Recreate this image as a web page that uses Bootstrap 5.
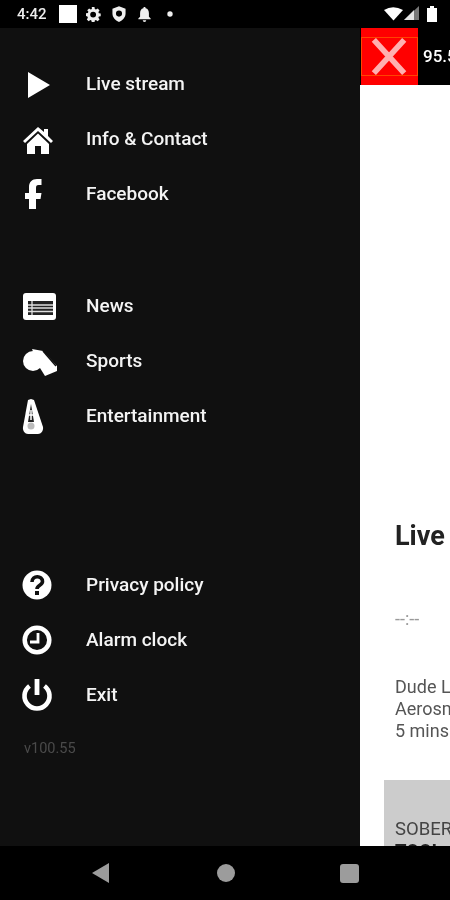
<!DOCTYPE html>
<html lang="en"><head><meta charset="utf-8"><title>Drawer</title>
<link href="https://cdn.jsdelivr.net/npm/bootstrap@5.3.0/dist/css/bootstrap.min.css" rel="stylesheet">
<style>
html,body{margin:0;height:900px;overflow:hidden;background:#000}
body{font-family:Roboto,"Liberation Sans",sans-serif;width:450px}
.statusrow{height:28px;background:#000;color:#eee;font-size:15px;font-weight:500;padding:0 13px 0 17px;filter:blur(.5px)}
.statusrow svg{display:block;flex:none}
.sq{width:18px;height:18px;background:#fff;margin-left:12px}
.mainrow{height:818px;overflow:hidden;filter:blur(.5px)}
.drawer{width:360px;flex:none;background:#101010;padding-top:28px}
.navitem{height:55px;color:#f4f4f4;font-size:19px;font-weight:500;line-height:1;padding-left:18px;gap:28px;white-space:nowrap}
.navitem svg{width:40px;height:40px;flex:none}
.grp2{margin-top:57px}.grp3{margin-top:114px}
.ver{color:#4a4a4a;font-size:14.500px;margin:17px 0 0 24px;line-height:20px}
.side{flex:1;min-width:0;background:#fff;overflow:hidden;white-space:nowrap}
.topbar{height:57px;background:#000;color:#fff;font-size:17px;font-weight:500}
.closebtn{width:57px;height:57px;margin-left:1px;background:#f00;flex:none;padding:9px 0;margin-right:5px}
.closeinner{height:39px;border:1px solid #f40;display:block;width:100%}
.livehead{font-size:27px;font-weight:700;color:#222;margin:436px 0 0 35px;line-height:30px}
.clock{font-size:18px;color:#999;margin:58px 0 0 35px;line-height:20px}
.track{font-size:18px;color:#555;line-height:22px;margin:47px 0 0 35px}
.graybox{background:#ccc;margin:38px 0 0 24px;height:80px;overflow:hidden;padding:39px 0 0 11px;font-size:18.500px;line-height:20px;color:#444}
.graybox b{color:#222;display:block;line-height:20px;margin-top:2px}
.btmbar{height:54px;background:#000;filter:blur(.5px)}
.softback{width:18px;height:20px;margin-left:92px}
.softhome{width:18px;height:18px;border-radius:50%;background:#9c9c9c;margin-left:107px}
.softrec{width:19px;height:19px;border-radius:3px;background:#9c9c9c;margin-left:105px}
</style></head><body>
<div class="statusrow d-flex align-items-center">
<span>4:42</span><span class="sq"></span>
<svg width="15" height="15" viewBox="0 0 16 16" style="margin-left:9px"><path fill="#eee" fill-rule="evenodd" d="M6.500 0h3l.4 2.200 1.300.6L13.200 1.600l2 2.200-1.300 1.800.5 1.300 2.100.5v3l-2.100.4-.5 1.300 1.300 1.800-2.200 2-1.800-1.200-1.300.5-.4 2.200h-3l-.4-2.200-1.300-.5-1.800 1.200-2.100-2 1.200-1.800-.5-1.300L0 10V7l2.100-.4.600-1.300L1.400 3.700l2.100-2.100 1.800 1.200 1.300-.6zM8 5.200a3.300 3.300 0 1 0 0 6.600 3.300 3.300 0 0 0 0-6.600z" transform="scale(.95)"/></svg>
<svg width="14" height="16" viewBox="0 0 16 18" style="margin-left:11px"><path fill="#eee" fill-rule="evenodd" d="M8 0l7.500 3v5.500c0 4.300-3 7.700-7.500 9.500C3.500 16.200.5 12.800.5 8.500V3zM8 5a3.500 3.500 0 1 0 0 7 3.500 3.500 0 0 0 0-7z"/></svg>
<svg width="13" height="15" viewBox="0 0 14 17" style="margin-left:12px"><path fill="#eee" d="M7 0c.8 0 1.300.6 1.300 1.400C10.800 2 12 4 12 7v4l2 2v1H0v-1l2-2V7c0-3 1.200-5 3.700-5.600C5.700.6 6.200 0 7 0zM5 15h4a2 2 0 0 1-4 0z"/></svg>
<svg width="6" height="6" viewBox="0 0 6 6" style="margin-left:16px"><circle cx="3" cy="3" r="2.700" fill="#eee"/></svg>
<svg class="ms-auto" width="53" height="16" viewBox="0 0 53 16"><path fill="#fff" d="M0 4Q9-1.500 19 4L9.500 14.500z"/><path fill="#777" d="M20 14 35 0v14z"/><path fill="#fff" d="M27 7 30 4v10h-10l3-3z" opacity=".8"/><path fill="#fff" d="M43 2h3V0h4v2h3v14H43z"/></svg>
</div>
<div class="mainrow d-flex">
<nav class="drawer">
<div class="navitem d-flex align-items-center"><svg viewBox="0 0 40 40"><path fill="#fff" d="M10 8 32 21 10 34z"/></svg><span>Live stream</span></div>
<div class="navitem d-flex align-items-center"><svg viewBox="0 0 40 40"><path fill="#fff" d="M20 8 5 22l2 2L20 12l13 12 2-2-5-5v-7h-4v3z"/><path fill="#fff" d="M9 25 20 14.500 31 25v10h-8v-8h-6v8H9z"/></svg><span>Info &amp; Contact</span></div>
<div class="navitem d-flex align-items-center"><svg viewBox="0 0 40 40"><path fill="#fff" d="M11 35V25H7v-6h4v-6c0-5 3-8 8-8h4.500v6h-3c-2 0-2.500 1-2.500 3v5h5.500l-1 6H18v10z"/></svg><span>Facebook</span></div>
<div class="navitem grp2 d-flex align-items-center"><svg viewBox="0 0 40 40"><rect x="5" y="7" width="33" height="27" rx="3" fill="#fff"/><path fill="#222" d="M10 15h25v14H10z"/><path stroke="#ddd" stroke-width="1.300" d="M10 19h25M10 22h25M10 25.500h25M14 15v14"/></svg><span>News</span></div>
<div class="navitem d-flex align-items-center"><svg viewBox="0 0 40 40"><circle cx="15" cy="20" r="10" fill="#fff"/><path fill="#fff" d="M14 8l11 2 14 15v5l-12 5-5-8z"/><path stroke="#101010" stroke-width="1.500" fill="none" d="M25 10l13 15"/></svg><span>Sports</span></div>
<div class="navitem d-flex align-items-center"><svg viewBox="0 0 40 40"><path fill="#fff" d="M13 3 16 4 25 31c.5 4-2 7-5 7H10c-3 0-5.500-3-5-7L10 4z"/><path fill="#222" d="M13 8 16 26h-6z"/><path stroke="#fff" stroke-width="1.500" d="M13 14v10M11 19h4"/><circle cx="13" cy="30" r="3.500" fill="#bbb"/></svg><span>Entertainment</span></div>
<div class="navitem grp3 d-flex align-items-center"><svg viewBox="0 0 40 40"><circle cx="19" cy="20" r="14.500" fill="#fff"/><path fill="none" stroke="#101010" stroke-width="3.600" d="M14 17c0-7 10.500-7 10.500-.5 0 4-5.500 3.500-5.500 7.500"/><rect x="17" y="26" width="4" height="4" fill="#101010"/></svg><span>Privacy policy</span></div>
<div class="navitem d-flex align-items-center"><svg viewBox="0 0 40 40"><circle cx="19" cy="20" r="12.300" fill="none" stroke="#fff" stroke-width="4.500"/><path fill="none" stroke="#fff" stroke-width="2.800" d="M20 13v9h-8"/></svg><span>Alarm clock</span></div>
<div class="navitem d-flex align-items-center"><svg viewBox="0 0 40 40"><path fill="none" stroke="#fff" stroke-width="4.600" d="M11.500 11A12.500 12.500 0 1 0 26.500 11"/><path stroke="#fff" stroke-width="4.800" d="M19 4v16"/></svg><span>Exit</span></div>
<div class="ver">v100.55</div>
</nav>
<section class="side">
<div class="topbar d-flex align-items-center"><span class="closebtn"><svg class="closeinner" viewBox="0 0 57 39"><path stroke="#ffb0b0" stroke-width="6" d="M12 2 44 37M44 2 12 37"/></svg></span><span>95.5 FM</span></div>
<div class="livehead">Live stream</div>
<div class="clock">--:--</div>
<div class="track">Dude Looks Like A Lady<br>Aerosmith<br>5 mins ago</div>
<div class="graybox">SOBER<b>TOOL</b></div>
</section>
</div>
<div class="btmbar d-flex align-items-center">
<svg class="softback" viewBox="0 0 18 20"><path fill="#9c9c9c" d="M0 10 17 0v20z"/></svg>
<span class="softhome"></span><span class="softrec"></span>
</div>
</body></html>
